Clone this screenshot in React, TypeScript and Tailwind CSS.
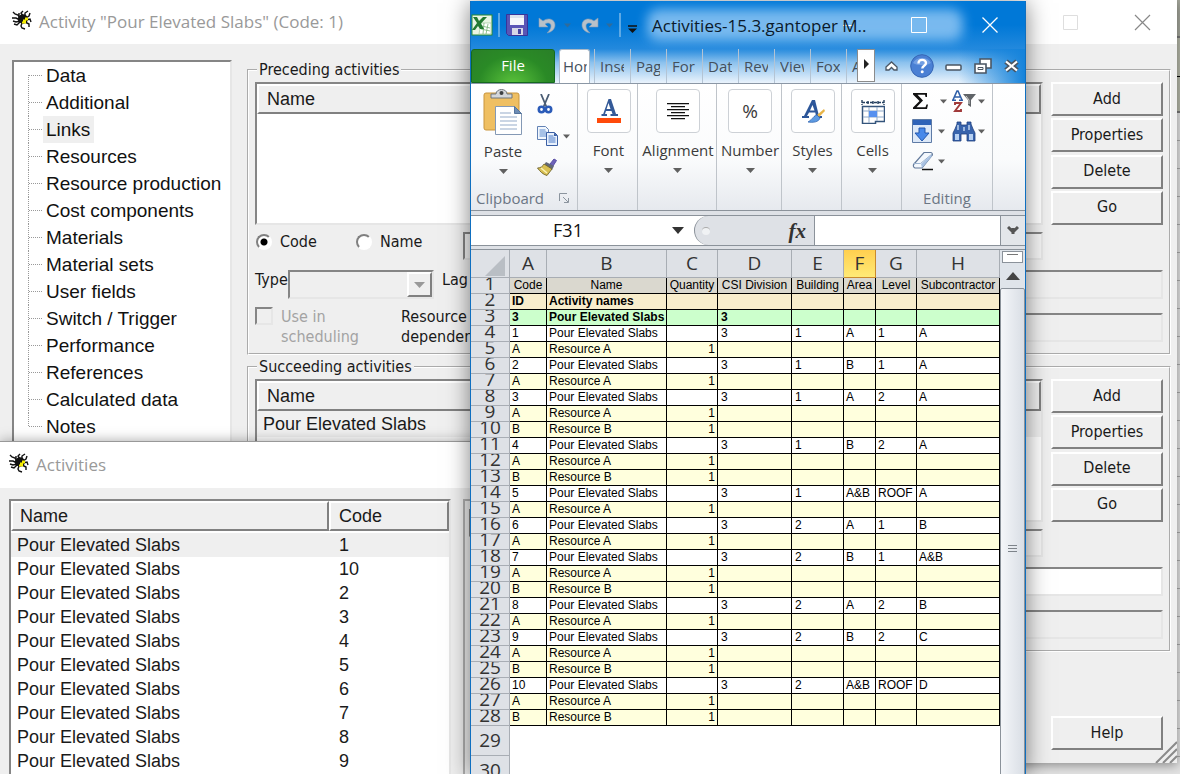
import React from "react";

const sunken = "border-2 border-t-[#858585] border-l-[#858585] border-r-[#e6e6e6] border-b-[#e6e6e6]";
const raised = "border-2 border-t-white border-l-white border-r-[#808080] border-b-[#808080] bg-[#efefef]";
const arial = "font-['Liberation_Sans',Arial,sans-serif]";
const tahoma = "font-['DejaVu_Sans_Condensed','DejaVu_Sans',sans-serif]";
const segoe = "font-['Open_Sans','Noto_Sans',sans-serif]";

function Spider() {
  return (
    <svg width="22" height="20" viewBox="0 0 22 20" fill="none" stroke="#111" strokeWidth="1.4" aria-hidden="true">
      <path d="M9 8 7 5 4 4 2 2M9 10 5 8 1 8M9 11 5 12 2 11M9 12 6 15 3 14M12 6 10 3 12 1M14 6 14 3 17 1M15 8 18 6 19 3M15 10 19 9 20 12M14 12 18 14 18 17M11 13 10 16 11 18 14 19M8 7 8 3" />
      <ellipse cx="12" cy="9" rx="4.5" ry="4" fill="#111" />
      <path d="M12 9.500h2v-2h3v3h-2v3h-4v-2h1z" fill="#f4ec00" stroke="none" />
    </svg>
  );
}

function Down({ small = false }: { small?: boolean }) {
  return (
    <svg width={small ? 7 : 9} height="5" viewBox="0 0 9 5" aria-hidden="true">
      <path d="M0 0h9L4.500 5z" fill="#606060" />
    </svg>
  );
}

/* ---------- Activity dialog ---------- */

const pages = [
  "Data", "Additional", "Links", "Resources", "Resource production", "Cost components", "Materials",
  "Material sets", "User fields", "Switch / Trigger", "Performance", "References", "Calculated data", "Notes",
];

function PageTree() {
  return (
    <ul className={`${sunken} ${arial} w-[220px] shrink-0 self-start bg-white pb-3 pl-[14px] text-[19px] leading-[27px]`}>
      {pages.map((p, i) => (
        <li key={p} className="flex">
          <svg width="15" height="27" aria-hidden="true" stroke="#999" strokeDasharray="1 1">
            <line x1="0.5" x2="0.5" y1={i === 0 ? 13 : 0} y2={i === pages.length - 1 ? 13 : 27} />
            <line x1="1" x2="14" y1="13.5" y2="13.5" />
          </svg>
          <a href="#" className={`whitespace-nowrap pr-1 pl-[3px] text-[#111] ${p === "Links" ? "bg-[#efefef]" : ""}`}>{p}</a>
        </li>
      ))}
    </ul>
  );
}

function PushButton({ children }: { children: React.ReactNode }) {
  return (
    <button className={`${raised} h-[34px] w-28 shrink-0 pb-px text-[16px] leading-5`}>{children}</button>
  );
}

function LinkGroup({ title, row, first }: { title: string; row?: string; first?: boolean }) {
  return (
    <fieldset className="min-w-0 border-2 border-white px-[6px] pb-[6px] [border-style:groove]">
      <legend className="ml-[2px] h-5 px-[2px] text-[16px] leading-5">{title}</legend>
      <div className="flex gap-2 pt-[2px]">
        <div className={`${sunken} h-[143px] min-w-0 flex-1 bg-white`}>
          <div className={`${raised} ${arial} h-[30px] pl-2 text-[18px] leading-[27px]`}>Name</div>
          {row && <div className={`${arial} bg-[#f0f0f0] pl-[6px] text-[18px] leading-[26px]`}>{row}</div>}
        </div>
        <div className="flex h-[143px] flex-col justify-between">
          <PushButton>Add</PushButton>
          <PushButton>Properties</PushButton>
          <PushButton>Delete</PushButton>
          <PushButton>Go</PushButton>
        </div>
      </div>
      <div className="mt-[7px] mr-[120px] flex h-7 text-[16px]">
        <div className="flex w-[208px] shrink-0 items-start pl-px">
          {first && (
            <>
              <label className="flex w-[100px] items-center gap-2">
                <input type="radio" name="key" defaultChecked className="size-4 appearance-none rounded-full border-2 border-t-[#808080] border-r-white border-b-white border-l-[#808080] bg-white bg-[radial-gradient(circle,#000_3px,transparent_4px)]" />
                <span className="leading-5">Code</span>
              </label>
              <label className="flex items-center gap-2">
                <input type="radio" name="key" className="size-4 appearance-none rounded-full border-2 border-t-[#808080] border-r-white border-b-white border-l-[#808080] bg-white" />
                <span className="leading-5">Name</span>
              </label>
            </>
          )}
        </div>
        <input aria-label="Search" className={`${sunken} min-w-0 flex-1 bg-[#f5f5f5]`} />
      </div>
      <div className="mt-[10px] flex h-[29px] text-[16px]">
        {first && (
          <>
            <label htmlFor="link-type" className="w-[33px] shrink-0 leading-5">Type</label>
            <div className="relative w-[146px] shrink-0">
              <select id="link-type" disabled aria-label="Type" className={`${sunken} h-full w-full appearance-none bg-[#efefef]`} />
              <span className={`${raised} absolute top-[2px] right-[2px] flex h-[25px] w-[25px] items-center justify-center`}>
                <svg width="11" height="6" aria-hidden="true"><path d="M0 0h11L5.500 6z" fill="#999" /></svg>
              </span>
            </div>
            <label htmlFor="lag" className="ml-2 leading-5">Lag</label>
          </>
        )}
        <input id={first ? "lag" : "lag-2"} aria-label="Lag" className={`${sunken} ml-4 min-w-0 flex-1 ${first ? "bg-[#efefef]" : "bg-white"}`} />
      </div>
      <div className="mt-2 flex h-10 text-[16px] leading-5">
        {first && (
          <>
            <label className="flex w-[146px] shrink-0 items-start gap-2 text-[#a3a3a3]">
              <input type="checkbox" disabled className={`${sunken} size-[18px] appearance-none bg-[#efefef]`} />
              <span>Use in<br />scheduling</span>
            </label>
            <label htmlFor="dep" className="w-24 shrink-0">Resource dependent</label>
          </>
        )}
        <input id={first ? "dep" : "dep-2"} aria-label="Resource dependency" className={`${sunken} mt-[6px] h-[29px] min-w-0 flex-1 bg-[#efefef]`} />
      </div>
    </fieldset>
  );
}

function ActivityDialog() {
  return (
    <section className={`${tahoma} absolute top-0 right-[3px] left-0 bg-[#efefef] text-[#1a1a1a] shadow-[0_2px_10px_rgba(0,0,0,0.4)]`}>
      <header className={`${segoe} flex h-11 items-center bg-white text-[#999]`}>
        <span className="ml-[11px] pb-1"><Spider /></span>
        <h1 className="ml-[6px] flex-1 text-[17px]">Activity "Pour Elevated Slabs" (Code: 1)</h1>
        <button aria-label="Maximize" className="mr-14">
          <svg width="15" height="15" fill="none" stroke="#dedede"><path d="M.5.5h14v14H.5z" /></svg>
        </button>
        <button aria-label="Close" className="mr-[26px]">
          <svg width="17" height="17" fill="none" stroke="#888" strokeWidth="1.2"><path d="m1 1 15 15M16 1 1 16" /></svg>
        </button>
      </header>
      <div className="flex gap-[15px] pt-4 pr-[6px] pl-3">
        <PageTree />
        <div className="flex min-w-0 flex-1 flex-col gap-[2px]">
          <LinkGroup title="Preceding activities" first />
          <LinkGroup title="Succeeding activities" row="Pour Elevated Slabs" />
        </div>
      </div>
      <footer className="flex justify-end pt-16 pr-[14px] pb-[13px]">
        <PushButton>Help</PushButton>
      </footer>
      <svg className="absolute right-0 bottom-0" width="22" height="22" stroke="#8a8a8a" strokeWidth="2" aria-hidden="true">
        <path d="M1 22 22 1M8 22 22 8M15 22l7-7" />
      </svg>
    </section>
  );
}

/* ---------- Activities list ---------- */

const codes = ["1", "10", "2", "3", "4", "5", "6", "7", "8", "9"];

function ActivitiesWindow() {
  return (
    <section className={`${arial} absolute top-[441px] bottom-0 left-0 w-[560px] overflow-hidden border-t border-[#999] bg-[#efefef] text-[#1a1a1a] shadow-[0_0_12px_rgba(0,0,0,0.35)]`}>
      <header className={`${segoe} flex h-[46px] items-center bg-white text-[#999]`}>
        <span className="ml-2 pb-1"><Spider /></span>
        <h2 className="ml-[6px] text-[17px]">Activities</h2>
      </header>
      <div className="flex gap-3 pt-[11px] pl-[9px]">
        <div className={`${sunken} h-[420px] w-[442px] shrink-0 bg-white`}>
          <table className="w-full table-fixed border-separate border-spacing-0 text-left text-[18px]">
            <colgroup><col /><col className="w-[120px]" /></colgroup>
            <thead>
              <tr className="h-[30px]">
                <th className={`${raised} py-0 pr-0 pl-[7px] font-normal leading-[26px]`}>Name</th>
                <th className={`${raised} py-0 pr-0 pl-2 font-normal leading-[26px]`}>Code</th>
              </tr>
            </thead>
            <tbody>
              <tr className="h-[2px]"><td colSpan={2} className="p-0" /></tr>
              {codes.map((c) => (
                <tr key={c} className={`h-6 leading-6 ${c === "1" ? "bg-[#efefef]" : ""}`}>
                  <td className="py-0 pr-0 pl-[6px]">Pour Elevated Slabs</td>
                  <td className="py-0 pr-0 pl-[10px]">{c}</td>
                </tr>
              ))}
            </tbody>
          </table>
        </div>
        <div className="h-[420px] flex-1 border-2 border-[#b0b0b0] pt-2 pl-1">
          <div className={`${sunken} h-7`} />
        </div>
      </div>
    </section>
  );
}

/* ---------- Spreadsheet window ---------- */

function ExcelLogo() {
  return (
    <svg width="22" height="22" viewBox="0 0 22 22" aria-hidden="true">
      <rect x="1" y="1" width="20" height="20" fill="#e9f5e4" stroke="#2b8a35" />
      <path d="M10 9h10v11H8z" fill="#fff" stroke="#9cc79a" strokeWidth=".7" />
      <path d="M11 12l8 2M10 15l9 2M13 9l-1 11M17 10l-2 10" stroke="#77b477" strokeWidth=".8" />
      <path d="M2 3h4l2 4 4-4h4L10 9.500 13 15H9l-2-3-3 4H1l5-7z" fill="#237a32" />
    </svg>
  );
}
function SaveIcon() {
  return (
    <svg width="22" height="22" viewBox="0 0 22 22" aria-hidden="true">
      <path d="M.5.5h21v21h-19l-2-2z" fill="#5a55b5" stroke="#37359a" />
      <path d="M4 1h14v10H4z" fill="#f5f7fb" />
      <path d="M4 1h14v3H4z" fill="#dbe2ee" />
      <path d="M6 14h11v7H6z" fill="#d6d8e6" />
      <path d="M12 15h3v5h-3z" fill="#4743a2" />
    </svg>
  );
}
function UndoIcon({ flip = false }: { flip?: boolean }) {
  return (
    <svg width="18" height="17" viewBox="0 0 18 17" aria-hidden="true">
      <g transform={flip ? "translate(18 0) scale(-1 1)" : undefined}>
        <path d="M1 1v9h9L7 7c3-2 6-1 6 2 0 2-1 4-4 7 5-1 8-4 8-8 0-6-7-8-12-4z" fill="#b9c1c9" stroke="#7f9cb8" strokeWidth=".6" />
      </g>
    </svg>
  );
}
function PasteIcon() {
  return (
    <svg width="40" height="47" viewBox="0 0 40 47" aria-hidden="true">
      <rect x="1" y="4" width="35" height="37" rx="2" fill="#efbf62" stroke="#c9953c" />
      <path d="M8 9V5h5c0-6 11-6 11 0h5v4z" fill="#d4d7da" stroke="#6f767d" />
      <circle cx="18.500" cy="4" r="2" fill="#3d4043" />
      <path d="M12.500 17.500h19l7 7v21h-26z" fill="#fff" stroke="#8499b5" />
      <path d="M31.500 17.500v7h7z" fill="#6d8db5" stroke="#54749c" />
      <path d="M17 24h11M17 28h17M17 32h17M17 36h17M17 40h17" stroke="#b9c8dc" strokeWidth="1.500" />
    </svg>
  );
}
function CutIcon() {
  return (
    <svg width="16" height="20" viewBox="0 0 16 20" fill="none" aria-hidden="true">
      <path d="M4 0 9.500 13M12 0 6.500 13" stroke="#4b5d74" strokeWidth="1.800" />
      <circle cx="4.500" cy="15.500" r="2.700" stroke="#2b5bb8" strokeWidth="2.600" />
      <circle cx="11.500" cy="15.500" r="2.700" stroke="#2b5bb8" strokeWidth="2.600" />
    </svg>
  );
}
function CopyIcon() {
  return (
    <svg width="21" height="20" viewBox="0 0 21 20" aria-hidden="true">
      <path d="M.5.5h8l3 3v10H.5z" fill="#f2f7fd" stroke="#6382b5" />
      <path d="M2.500 4h6M2.500 6h7M2.500 8h7M2.500 10h7" stroke="#5b8bd0" />
      <path d="M9.500 6.500h8l3 3v10h-11z" fill="#e9f1fc" stroke="#3a5fa4" />
      <path d="M17 6.500v3.500h3.500" fill="#3a5fa4" />
      <path d="M11.500 10h5M11.500 12h7M11.500 14h7M11.500 16h7" stroke="#4a7bc8" />
    </svg>
  );
}
function BrushIcon() {
  return (
    <svg width="20" height="18" viewBox="0 0 20 18" aria-hidden="true">
      <path d="m13 6 4-5 2.500 1.500L16 8z" fill="#6d62b8" stroke="#5a4fa5" />
      <path d="M9 4 17 8l-2 4-8-5z" fill="#626878" />
      <path d="m7 6 8 5-5 6.500c-4-1-7-4-9.500-7.500C4 10 6 8 7 6z" fill="#d9c052" stroke="#6f642f" strokeWidth=".9" />
      <path d="m4 10 6 5" stroke="#fbf2b5" strokeWidth="1.600" />
    </svg>
  );
}
function FontIcon() {
  return (
    <svg width="24" height="24" viewBox="0 0 24 24" aria-hidden="true">
      <path d="M11.500 0h2.500l5 15H21v2h-7.500v-2h2l-1-3H9l-1 3h2v2H4.500v-2h1.700zM11.500 4 9.600 10h3.900z" fill="#345a98" />
      <path d="M0 19h24v5H0z" fill="#ff4a0a" />
    </svg>
  );
}
function AlignIcon() {
  return (
    <svg width="22" height="17" viewBox="0 0 22 17" stroke="#111" strokeWidth="1.200" aria-hidden="true">
      <path d="M0 .6h22M4 3.600h14M0 6.600h22M4 9.600h14M0 12.600h22M4 15.600h14" />
    </svg>
  );
}
function StylesIcon() {
  return (
    <svg width="24" height="24" viewBox="0 0 24 24" aria-hidden="true">
      <path d="M11 1h3l4 16h3v2h-8v-2h2l-.7-3.500H8L6 17h2v2H1v-2h2zM11.500 6 9 11.500h4.500z" fill="#2c5699" />
      <path d="M23 10 16 16l2 2 6-6z" fill="#e8b447" />
      <path d="M16 16c-3 0-4 4-9 7 5 1 11 0 12-4z" fill="#5d9ae2" stroke="#2d62ad" strokeWidth=".7" />
    </svg>
  );
}
function CellsIcon() {
  return (
    <svg width="24" height="25" viewBox="0 0 24 25" aria-hidden="true">
      <path d="M1 1v5M23 1v5M1 3.500h22M7 2v3M12 2v3M17 2v3" stroke="#25405f" strokeWidth="1.400" strokeDasharray="3 1" />
      <path d="M1.500 7.500h22v15h-9v2h-13z" fill="#fff" stroke="#34547b" strokeWidth="1.500" />
      <path d="M2 12h21M2 18h21M8 8v16M16 8v14" stroke="#8fa9c9" />
      <path d="M8 12h8v6H8z" fill="#5690ef" />
    </svg>
  );
}
function SortIcon() {
  return (
    <svg width="24" height="23" viewBox="0 0 24 23" fill="none" aria-hidden="true">
      <path d="m1 10 4-9h1l4 9M3 7h6M0 10.300h4M7 10.300h4" stroke="#2f5fa8" strokeWidth="1.600" />
      <path d="M3 15v-2h6L3 21h6v-2" stroke="#a13a3a" strokeWidth="1.900" />
      <path d="M11 4h13l-5 6v7l-3-2v-5z" fill="#606468" />
      <path d="m14 6 3 4v4" stroke="#d5d5d5" />
    </svg>
  );
}
function FillIcon() {
  return (
    <svg width="20" height="24" viewBox="0 0 20 24" aria-hidden="true">
      <path d="M.5.5h19v23H.5z" fill="#dce8f8" stroke="#5e7ba6" />
      <path d="M1 1h18v5H1z" fill="#2f63b8" />
      <path d="M7 9h6v5h4l-7 8-7-8h4z" fill="#4788ea" stroke="#2357ad" />
    </svg>
  );
}
function FindIcon() {
  return (
    <svg width="24" height="21" viewBox="0 0 24 21" aria-hidden="true">
      <path d="M5 3V1h4v3h6V1h4v2l2 5 2 4v8h-8v-7H9v7H1v-8l2-4z" fill="#3763ac" stroke="#1e3f7d" strokeWidth=".8" />
      <path d="M3 13h4v6H3zM17 13h4v6h-4z" fill="#b6d0f2" />
      <path d="M6 4v5M17 4v5M12 6v4" stroke="#c6daf4" strokeWidth="1.400" />
    </svg>
  );
}
function EraserIcon() {
  return (
    <svg width="22" height="20" viewBox="0 0 22 20" aria-hidden="true">
      <path d="M10 18.500h11" stroke="#111" strokeWidth="1.500" />
      <path d="M12 1.500h7c1 0 2 2 1 3L10 17H3c-2-1-2-3-1-4z" fill="#f4f8fd" stroke="#62799a" strokeWidth="1.200" />
      <path d="M1.500 12.500h7L20 3" fill="none" stroke="#9cb3cf" />
      <path d="M9 13 19 4l1 1L10 17z" fill="#a8c1e2" />
    </svg>
  );
}

function TitleBar() {
  return (
    <header className="relative flex h-12 items-center bg-[#0078d7] bg-[linear-gradient(#0078d7_50%,#2389dd)]">
      <div className="absolute top-2 right-[62px] left-[176px] h-8 rounded-xl bg-[#86c1f2] opacity-90 blur-[6px]" />
      <ExcelLogo />
      <span className="ml-[5px] h-6 w-[2px] bg-[#5ea9e4]" />
      <button aria-label="Save" className="ml-[6px]"><SaveIcon /></button>
      <button aria-label="Undo" className="ml-[10px]"><UndoIcon /></button>
      <span className="ml-2 opacity-50"><Down small /></span>
      <button aria-label="Redo" className="ml-[10px]"><UndoIcon flip /></button>
      <span className="ml-[7px] opacity-50"><Down small /></span>
      <span className="ml-[6px] h-6 w-[2px] bg-[#5ea9e4]" />
      <button aria-label="Customize" className="relative mt-2 ml-[7px]">
        <svg width="9" height="9"><path d="M0 1h9" stroke="#111" strokeWidth="1.500" /><path d="M0 3.500h9L4.500 8z" fill="#111" /></svg>
      </button>
      <div className="relative ml-auto flex h-full items-center">
        <button aria-label="Minimize" className="flex w-[71px] justify-center"><span className="h-px w-[10px] bg-white" /></button>
        <button aria-label="Maximize" className="flex w-[71px] justify-center">
          <svg width="16" height="16" fill="none" stroke="#fff"><path d="M.5.5h15v15H.5z" /></svg>
        </button>
        <button aria-label="Close" className="flex w-[71px] justify-center">
          <svg width="16" height="16" fill="none" stroke="#fff" strokeWidth="1.300"><path d="m.5.5 15 15m0-15-15 15" /></svg>
        </button>
      </div>
      <h2 className="absolute top-[11px] left-[181px] text-[17px] leading-7 whitespace-nowrap text-[#0b1a2b]">Activities-15.3.gantoper M..</h2>
    </header>
  );
}

const tabs = ["Inse", "Pag", "For", "Dat", "Rev", "View", "Fox"];

function TabRow() {
  return (
    <nav className="flex h-[35px] items-stretch border-b border-[#8b97a5] bg-[linear-gradient(90deg,transparent_88%,#1583db_100%),linear-gradient(#2389dd,#8cc2ee_40%,#eaf3fc)] text-[15px] text-[#44505c]">
      <button className="w-[84px] rounded-t-[3px] border border-[#156a1e] bg-[radial-gradient(ellipse_at_50%_110%,#5cc43c,#2a8a26_60%,#2a7f28)] pb-px text-white">File</button>
      <button className="ml-1 w-[31px] overflow-hidden rounded-t-[3px] border border-b-0 border-[#a9b8c7] bg-white text-left whitespace-nowrap">
        <span className="ml-[3px] block w-6 overflow-hidden">Hom</span>
      </button>
      <div className="ml-1 flex">
        {tabs.map((t) => (
          <button key={t} className="w-[36px] border-l border-[#b4c4d4] text-left">
            <span className="ml-[5px] block w-6 overflow-hidden">{t}</span>
          </button>
        ))}
        <button className="w-[11px] overflow-hidden border-l border-[#b4c4d4] pl-[5px] text-left">A</button>
      </div>
      <button aria-label="Scroll tabs" className="mb-px flex w-[18px] items-center justify-center border border-[#8b8b8b] bg-white pb-1">
        <svg width="5" height="10"><path d="M0 0l5 5-5 5z" fill="#222" /></svg>
      </button>
      <div className="flex flex-1 items-center justify-between pr-[5px] pl-[10px]">
        <button aria-label="Collapse ribbon">
          <svg width="13" height="11" fill="#fff" stroke="#4a5663" strokeWidth="1.300"><path d="m1 6 5.500-5L12 6v3H9L6.500 6.500 4 9H1z" /></svg>
        </button>
        <button aria-label="Help">
          <svg width="24" height="24" viewBox="0 0 24 24">
            <circle cx="12" cy="12" r="11.300" fill="#4a80d4" stroke="#3565b4" />
            <path d="M3 9a10 9 0 0 1 18 0c-5 3-13 3-18 0z" fill="#8db4ec" opacity=".6" />
            <path d="M8.500 9.500c0-5 7.500-4.500 7.500-.5 0 3-3.700 2.500-3.700 5.500" fill="none" stroke="#fff" strokeWidth="2.400" />
            <circle cx="12.200" cy="17.800" r="1.500" fill="#fff" />
          </svg>
        </button>
        <button aria-label="Minimize workbook" className="pt-1">
          <svg width="17" height="8" fill="#fff" stroke="#4a5663" strokeWidth="1.500"><rect x="1" y="1" width="15" height="5" rx="1" /></svg>
        </button>
        <button aria-label="Restore workbook">
          <svg width="18" height="17" fill="#fff" stroke="#4a5663" strokeWidth="1.600"><path d="M6 1h11v9H6z" /><path d="M1 6h11v9H1z" /><path d="M4 9.500h5v2H4z" strokeWidth="1" /></svg>
        </button>
        <button aria-label="Close workbook">
          <svg width="17" height="14" viewBox="0 0 17 14" fill="none"><path d="m3 2.500 11 9M14 2.500l-11 9" stroke="#4a5663" strokeWidth="5.400" /><path d="m3 2.500 11 9M14 2.500l-11 9" stroke="#fff" strokeWidth="2.200" /></svg>
        </button>
      </div>
    </nav>
  );
}

const groupBase = "shrink-0 border-r border-[#bfc4ca]";

function RibbonGroup({ label, width, children }: { label: string; width: string; children: React.ReactNode }) {
  return (
    <div className={`${groupBase} ${width} flex justify-center pt-[5px] pl-[2px]`}>
      <button className="flex flex-col items-center">
        <span className="flex size-11 items-center justify-center rounded-[4px] border border-[#cdd1d6] bg-white">{children}</span>
        <span className="mt-[7px] mb-2 leading-5">{label}</span>
        <Down />
      </button>
    </div>
  );
}

function Ribbon() {
  return (
    <div className="flex h-[127px] border-b border-[#8b929a] bg-[linear-gradient(#fff,#fafbfc_60%,#e6e9ee)] text-[15px] text-[#3b3b3b]">
      <div className={`${groupBase} flex w-[107px] flex-col justify-between pt-[5px]`}>
        <div className="flex">
          <button className="ml-3 flex w-10 flex-col items-center">
            <PasteIcon />
            <span className="mt-[5px] mb-2 leading-5">Paste</span>
            <Down />
          </button>
          <div className="ml-[14px] flex flex-col gap-3 pt-[5px]">
            <button aria-label="Cut"><CutIcon /></button>
            <div className="flex items-center gap-[5px]">
              <button aria-label="Copy"><CopyIcon /></button>
              <Down small />
            </div>
            <button aria-label="Format painter"><BrushIcon /></button>
          </div>
        </div>
        <div className="flex items-center justify-between pr-2 pl-[5px] leading-6 text-[#6b7684]">
          Clipboard
          <svg width="10" height="10" fill="none" stroke="#8b949e" aria-hidden="true"><path d="M.5 8V.5H8M4 4l5 5M9.500 5v4.500H5" /></svg>
        </div>
      </div>
      <RibbonGroup label="Font" width="w-[60px]"><FontIcon /></RibbonGroup>
      <RibbonGroup label="Alignment" width="w-[79px]"><AlignIcon /></RibbonGroup>
      <RibbonGroup label="Number" width="w-[65px]"><span className="text-[19px]">%</span></RibbonGroup>
      <RibbonGroup label="Styles" width="w-[60px]"><StylesIcon /></RibbonGroup>
      <RibbonGroup label="Cells" width="w-[60px]"><CellsIcon /></RibbonGroup>
      <div className={`${groupBase} flex w-[91px] flex-col justify-between pt-[5px]`}>
        <div className="grid grid-cols-[24px_16px_26px_8px] items-center gap-y-[6px] pl-[10px]">
          <button aria-label="Sum" className="flex h-6 items-center">
            <svg width="18" height="18"><path d="M1 1h14v4h-1.500L13 2.800H5.500l5.500 5.700-6.500 6.700h9l1-2.700H16L15 17H1v-1.500l6.500-6.500L1 2.500z" fill="#111" /></svg>
          </button>
          <span className="pl-1"><Down small /></span>
          <button aria-label="Sort and filter"><SortIcon /></button>
          <Down small />
          <button aria-label="Fill"><FillIcon /></button>
          <span className="pl-[2px]"><Down small /></span>
          <button aria-label="Find"><FindIcon /></button>
          <Down small />
          <button aria-label="Clear" className="flex h-6 items-center"><EraserIcon /></button>
          <span className="pl-[2px]"><Down small /></span>
        </div>
        <div className="text-center leading-6 text-[#6b7684]">Editing</div>
      </div>
    </div>
  );
}

function FormulaBar() {
  return (
    <div className="mt-1 mb-[3px] flex h-[31px] border-y border-[#8b929a] bg-white">
      <div className="flex w-[223px] shrink-0 items-center">
        <input aria-label="Name box" defaultValue="F31" className="w-[194px] text-center text-[18px] text-[#111] outline-none" />
        <svg className="ml-[7px]" width="12" height="7" aria-hidden="true"><path d="M0 0h12L6 7z" fill="#333" /></svg>
      </div>
      <div className="flex w-[120px] shrink-0 items-center justify-between rounded-l-full border-l border-[#8b929a] bg-[#dee1e6] pr-2 pl-[7px]">
        <span className="size-2 rounded-full border-t border-[#aaa] bg-[#f0f2f4]" />
        <span className="font-['Liberation_Serif',serif] text-[21px] leading-6 font-bold text-[#333] italic">fx</span>
      </div>
      <input aria-label="Formula" className="min-w-0 flex-1 border-l border-[#8b929a] outline-none" />
      <button aria-label="Expand formula bar" className="flex w-[25px] items-center justify-center border-l border-[#8b929a] bg-[#e3e6ea]">
        <svg width="12" height="10" fill="none" stroke="#555" strokeWidth="3"><path d="m1 1 5 5 5-5M6 2v6" /></svg>
      </button>
    </div>
  );
}

const P = "Pour Elevated Slabs";
const RA = ["A", "Resource A", "1"];
const RB = ["B", "Resource B", "1"];
const sheet: string[][] = [
  ["Code", "Name", "Quantity", "CSI Division", "Building", "Area", "Level", "Subcontractor"],
  ["ID", "Activity names"],
  ["3", P, "", "3"],
  ["1", P, "", "3", "1", "A", "1", "A"], RA,
  ["2", P, "", "3", "1", "B", "1", "A"], RA,
  ["3", P, "", "3", "1", "A", "2", "A"], RA, RB,
  ["4", P, "", "3", "1", "B", "2", "A"], RA, RB,
  ["5", P, "", "3", "1", "A&B", "ROOF", "A"], RA,
  ["6", P, "", "3", "2", "A", "1", "B"], RA,
  ["7", P, "", "3", "2", "B", "1", "A&B"], RA, RB,
  ["8", P, "", "3", "2", "A", "2", "B"], RA,
  ["9", P, "", "3", "2", "B", "2", "C"], RA, RB,
  ["10", P, "", "3", "2", "A&B", "ROOF", "D"], RA, RB,
];
const letters = ["A", "B", "C", "D", "E", "F", "G", "H"];

function rowStyle(row: string[], i: number) {
  if (i === 0) return "bg-[#dad8cf] text-center";
  if (i === 1) return "bg-[#f8edcc] font-bold";
  if (i === 2) return "bg-[#ccffcc] font-bold";
  return row[1].startsWith("Resource") ? "bg-[#ffffdd]" : "bg-white";
}

function Sheet() {
  return (
    <div className="flex min-h-0 flex-1 overflow-hidden border-t border-[#8b929a] bg-white">
      <table className="w-[529px] shrink-0 table-fixed border-separate border-spacing-0 self-start">
        <colgroup>
          <col className="w-[39px]" /><col className="w-[37px]" /><col className="w-[120px]" /><col className="w-[51px]" />
          <col className="w-[74px]" /><col className="w-[52px]" /><col className="w-[32px]" /><col className="w-[41px]" /><col className="w-[83px]" />
        </colgroup>
        <thead>
          <tr className="h-[28px] text-[19px] leading-[27px] text-[#333]">
            <td className="border-r border-b border-[#a8adb4] bg-[#dee1e6] p-0">
              <svg className="mt-1 mr-1 ml-auto" width="20" height="20" aria-hidden="true"><path d="M20 0v20H0z" fill="#b9bec4" /></svg>
            </td>
            {letters.map((l) => (
              <th key={l} className={`border-r border-b p-0 font-normal ${l === "F" ? "border-[#c98a2e] bg-[linear-gradient(#ffcf4f,#ffea76)]" : "border-[#a8adb4] bg-[#dee1e6]"}`}>{l}</th>
            ))}
          </tr>
        </thead>
        <tbody>
          {sheet.map((row, i) => (
            <tr key={i} className={`h-4 text-[12px] leading-[15px] whitespace-nowrap text-black ${arial} ${rowStyle(row, i)}`}>
              <th className={`${segoe} border-r border-b border-[#a8adb4] bg-[#dee1e6] p-0 font-normal`}>
                <div className="h-[15px] overflow-hidden text-center text-[19px] leading-[11px] text-[#333]">{i + 1}</div>
              </th>
              {letters.map((l, c) => (
                <td key={l} className={`border-r border-b border-black py-0 ${i === 0 ? "px-0" : c === 2 ? "pr-[2px] pl-0 text-right" : c < 2 || c > 4 ? "pr-0 pl-[2px]" : "pr-0 pl-[3px]"}`}>
                  {row[c] ?? ""}
                </td>
              ))}
            </tr>
          ))}
          {[29, 30].map((n) => (
            <tr key={n} className="h-[30px]">
              <th className="border-r border-b border-[#a8adb4] bg-[#dee1e6] p-0 text-[19px] leading-[29px] font-normal text-[#333]">{n}</th>
              <td colSpan={8} className="bg-white p-0" />
            </tr>
          ))}
        </tbody>
      </table>
      <div className="flex flex-1 flex-col bg-[#dfe4ea]">
        <div className="mx-[2px] mt-px h-3 shrink-0 border border-[#8b929a] bg-white pt-[2px]"><div className="mx-1 h-px bg-[#777]" /></div>
        <button aria-label="Scroll up" className="flex h-[25px] shrink-0 items-center justify-center">
          <svg width="14" height="8"><path d="M0 8h14L7 0z" fill="#444" /></svg>
        </button>
        <div className="flex h-[520px] shrink-0 flex-col items-center justify-center gap-[2px] rounded-[2px] border border-[#8b929a] bg-[linear-gradient(90deg,#f4f6f9,#d9dee5)]">
          <span className="h-px w-[9px] bg-[#7d838a]" /><span className="h-px w-[9px] bg-[#7d838a]" /><span className="h-px w-[9px] bg-[#7d838a]" />
        </div>
      </div>
    </div>
  );
}

function ExcelWindow() {
  return (
    <section className={`${segoe} absolute top-px bottom-0 left-[470px] flex w-[556px] flex-col border-x border-[#0f6fc0] bg-[#dee1e6] shadow-[0_2px_22px_rgba(0,0,0,0.5)]`}>
      <TitleBar />
      <TabRow />
      <Ribbon />
      <FormulaBar />
      <Sheet />
    </section>
  );
}

export default function App() {
  return (
    <main className="relative h-screen overflow-hidden bg-[#ececec]">
      <div className="flex h-full flex-col items-end">
        <div className="h-[38px] w-1 shrink-0 border-b-2 border-[#777] bg-[#a5a79c]" />
        <div className="h-[39px] w-1 shrink-0 border-b border-black bg-[#b5b7a8]" />
        <div className="h-9 w-1 shrink-0 border-b-2 border-[#777] bg-[#b5b7a8]" />
        <div className="w-full flex-1 bg-[#e6e6e6] bg-[repeating-linear-gradient(#e2e2e2_0_27px,#aaa_27px_28px)]" />
      </div>
      <ActivityDialog />
      <ActivitiesWindow />
      <ExcelWindow />
    </main>
  );
}
